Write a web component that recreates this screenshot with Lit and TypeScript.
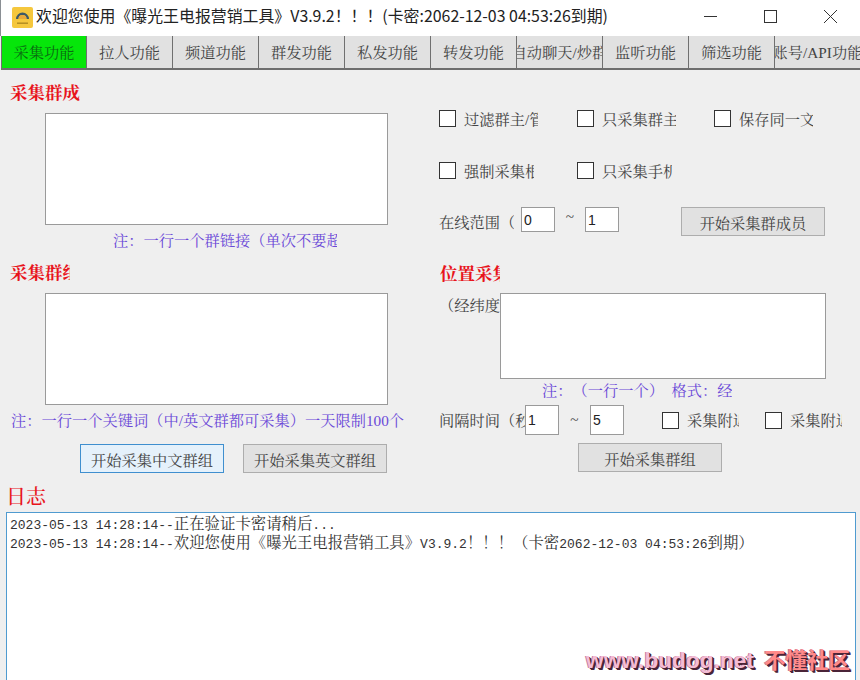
import { LitElement, html, css } from "lit";
import { customElement } from "lit/decorators.js";

const TABS = ["采集功能","拉人功能","频道功能","群发功能","私发功能","转发功能","自动聊天/炒群","监听功能","筛选功能","账号/API功能"];

@customElement("app-root")
export class AppRoot extends LitElement {
  static styles = css`
    :host { display:block; width:860px; height:680px; overflow:hidden; position:relative; background:#efefef;
      font-family:"Liberation Serif","Noto Serif CJK SC","Noto Sans CJK SC",serif; color:#444; font-size:15.25px; text-spacing-trim:space-all; }
    * { box-sizing:border-box; }
    .titlebar { height:36px; background:#fff; display:flex; align-items:center; padding-left:11px; border-left:1px solid #8a8f94;
      font-family:"Noto Sans CJK SC","Noto Sans",sans-serif; font-size:15.9px; color:#222; }
    .titlebar svg.logo { width:21px; height:21px; margin-right:3px; flex:none; margin-top:-2px; }
    .title { flex:1; white-space:nowrap; margin-top:-5px; }
    .ctl { display:flex; }
    .ctl div { width:60px; height:36px; display:flex; align-items:center; justify-content:center; margin-top:-3px; }
    .ctl svg { width:15px; height:15px; }
    .tabs { height:34px; display:grid; grid-template-columns:repeat(10,86px); margin-left:1px; border-bottom:2px solid #6e6e6e; background:#e1e1e1; }
    .tab { height:32px; padding-bottom:2px; display:flex; align-items:center; justify-content:center; overflow:hidden; white-space:nowrap;
      background:#e1e1e1; border-right:1px solid #707070; color:#444; }
    .tab.on { background:#06e60a; color:#0a6a12; border-left:1px solid #707070; }
    .content { display:grid; grid-template-columns:439px 1fr; height:410px; }
    .left { padding:13px 0 0 11px; }
    .right { padding:38px 0 0 0; }
    .head { color:#e8141c; font-weight:700; font-size:17.5px; line-height:20px; height:20px; overflow:hidden; white-space:nowrap; }
    .left .head { margin-left:-1px; }
    .w70 { width:70px; } .w60 { width:60px; } .w61 { width:60px; margin-left:1px; }
    textarea { display:block; background:#fff; border:1px solid #9a9a9a; border-radius:0; resize:none; padding:0; margin:0; outline:none; }
    .ta1 { width:343px; height:112px; margin:10px 0 0 34px; }
    .ta2 { width:343px; height:112px; margin:10px 0 0 34px; }
    .note { color:#6b49d8; font-size:15.25px; line-height:18px; white-space:nowrap; overflow:hidden; }
    .n1 { width:224px; margin:7px 0 0 102px; }
    .n2 { margin:7px 0 0 0; width:410px; }
    .n3 { width:190px; margin:3px 0 0 103px; }
    .head.second { margin-top:13px; }
    .btns { display:flex; gap:19px; margin:14px 0 0 69px; }
    button { font:inherit; color:#444; width:144px; height:29px; background:#e1e1e1; border:1px solid #adadad; border-radius:0; padding:0; white-space:nowrap; }
    button.focus { background:#e5f1fb; border-color:#3f8fcf; }
    .row { display:flex; align-items:center; white-space:nowrap; }
    .cb { appearance:none; -webkit-appearance:none; width:17px; height:17px; margin:0; background:#fff; border:1px solid #333; flex:none; }
    .lbl { overflow:hidden; white-space:nowrap; flex:none; }
    .item { display:flex; align-items:center; gap:8px; flex:none; }
    .r1 { height:18px; margin-top:1px; }
    .r1 .item { width:138px; }
    .r1 .item:nth-child(2) { width:137px; }
    .l74 { width:74px; } .l70 { width:70px; }
    .r2 { height:18px; margin-top:34px; }
    .r2 .item { width:138px; }
    .r3 { height:28px; margin-top:28px; align-items:flex-start; }
    .fld { font-family:"Liberation Sans",sans-serif; font-size:14px; color:#222; background:#fff; border:1px solid #9a9a9a; border-radius:0; padding:0 0 0 2px; margin:0; outline:none; flex:none; width:34px; }
    .r3 .fld { height:25px; }
    .r3 .lb { width:75px; margin-right:7px; line-height:32px; height:28px; }
    .tilde { width:30px; text-align:center; flex:none; line-height:20px; }
    .r3 button { margin-left:62px; }
    .head.pos { margin-top:29px; }
    .geo { display:flex; align-items:flex-start; margin-top:9px; }
    .geo .lbl { width:61px; line-height:26px; height:26px; }
    .ta3 { width:326px; height:86px; }
    .r4 { height:30px; margin-top:5px; }
    .r4 .lb { width:86px; padding-bottom:2px; }
    .r4 .fld { height:30px; }
    .r4 .tilde { width:31px; }
    .r4 .a { margin-left:38px; width:103px; }
    .r4 .b { width:85px; }
    .l52 { width:52px; padding-bottom:2px; }
    .btn3 { margin:8px 0 0 139px; display:block; }
    .loghead { color:#e8141c; font-size:20px; line-height:26px; margin:4px 0 0 6px; height:28px; font-weight:500; }
    .log { margin:0 0 0 6px; width:850px; height:168px; background:#fff; border:1px solid #4f9bd0; border-bottom:none; padding:3px 0 0 3px;
      font-family:"Liberation Mono",monospace; font-size:13px; line-height:18px; color:#333; white-space:pre; overflow:hidden; }
    .log span { font-family:"Liberation Serif","Noto Serif CJK SC","Noto Sans CJK SC",serif; font-size:15.4px; line-height:1; }
    .mark { position:absolute; left:586px; top:646px; white-space:nowrap; font-family:"Liberation Sans","Noto Sans CJK SC",sans-serif; font-weight:700; line-height:28px; pointer-events:none;
      text-shadow:1px 1px 0 #4a2438, 2px 2px 0 #4a2438, -1px 0 0 #c77c9c; }
    .mark .a { color:#f4bcd4; margin-right:10px; font-size:22.7px; }
    .mark .b { color:#ff8a8a; font-size:21.5px; }
  `;

  render() {
    return html`
      <div class="titlebar">
        <svg class="logo" viewBox="0 0 21 21">
          <rect width="21" height="21" rx="2" fill="#f5c73d"/>
          <path d="M4 12 A6.5 6.5 0 0 1 17 12 L14.5 12 A4 4 0 0 0 6.5 12 Z" fill="#3f5a66"/>
          <path d="M6.5 12 A4 4 0 0 1 14.5 12 Z" fill="#e9a93a"/>
          <rect x="5" y="15.5" width="11" height="1.4" fill="#b08a20"/>
        </svg>
        <div class="title">欢迎您使用《曝光王电报营销工具》V3.9.2！！！(卡密:2062-12-03 04:53:26到期)</div>
        <div class="ctl">
          <div><svg viewBox="0 0 15 15"><path d="M1 7.5H14" stroke="#333" fill="none"/></svg></div>
          <div><svg viewBox="0 0 15 15"><rect x="1.5" y="1.5" width="12" height="12" stroke="#333" fill="none"/></svg></div>
          <div><svg viewBox="0 0 15 15"><path d="M1 1L14 14M14 1L1 14" stroke="#333" fill="none"/></svg></div>
        </div>
      </div>
      <div class="tabs">${TABS.map((t, i) => html`<div class="tab ${i === 0 ? "on" : ""}"><span>${t}</span></div>`)}</div>
      <div class="content">
        <div class="left">
          <div class="head w70">采集群成员</div>
          <textarea class="ta1"></textarea>
          <div class="note n1">注：一行一个群链接（单次不要超过</div>
          <div class="head second w60">采集群组</div>
          <textarea class="ta2"></textarea>
          <div class="note n2">注：一行一个关键词（中/英文群都可采集）一天限制100个</div>
          <div class="btns">
            <button class="focus">开始采集中文群组</button>
            <button>开始采集英文群组</button>
          </div>
        </div>
        <div class="right">
          <div class="row r1">
            <div class="item"><input class="cb" type="checkbox"/><div class="lbl l74">过滤群主/管理员</div></div>
            <div class="item"><input class="cb" type="checkbox"/><div class="lbl l74">只采集群主</div></div>
            <div class="item"><input class="cb" type="checkbox"/><div class="lbl l74">保存同一文件</div></div>
          </div>
          <div class="row r2">
            <div class="item"><input class="cb" type="checkbox"/><div class="lbl l70">强制采集根据</div></div>
            <div class="item"><input class="cb" type="checkbox"/><div class="lbl l70">只采集手机号</div></div>
          </div>
          <div class="row r3">
            <div class="lbl lb">在线范围（天）</div>
            <input class="fld" value="0"/>
            <div class="tilde">~</div>
            <input class="fld" value="1"/>
            <button>开始采集群成员</button>
          </div>
          <div class="head pos w61">位置采集</div>
          <div class="geo">
            <div class="lbl">（经纬度）</div>
            <textarea class="ta3"></textarea>
          </div>
          <div class="note n3">注：（一行一个）&nbsp;&nbsp;格式：经度,纬度</div>
          <div class="row r4">
            <div class="lbl lb">间隔时间（秒）</div>
            <input class="fld" value="1"/>
            <div class="tilde">~</div>
            <input class="fld" value="5"/>
            <div class="item a"><input class="cb" type="checkbox"/><div class="lbl l52">采集附近</div></div>
            <div class="item b"><input class="cb" type="checkbox"/><div class="lbl l52">采集附近</div></div>
          </div>
          <button class="btn3">开始采集群组</button>
        </div>
      </div>
      <div class="loghead">日志</div>
      <div class="log">2023-05-13 14:28:14--<span>正在验证卡密请稍后</span>...
2023-05-13 14:28:14--<span>欢迎您使用《曝光王电报营销工具》</span>V3.9.2<span>！！！（卡密</span>2062-12-03 04:53:26<span>到期）</span></div>
      <div class="mark"><span class="a">www.budog.net</span><span class="b">不懂社区</span></div>
    `;
  }
}
